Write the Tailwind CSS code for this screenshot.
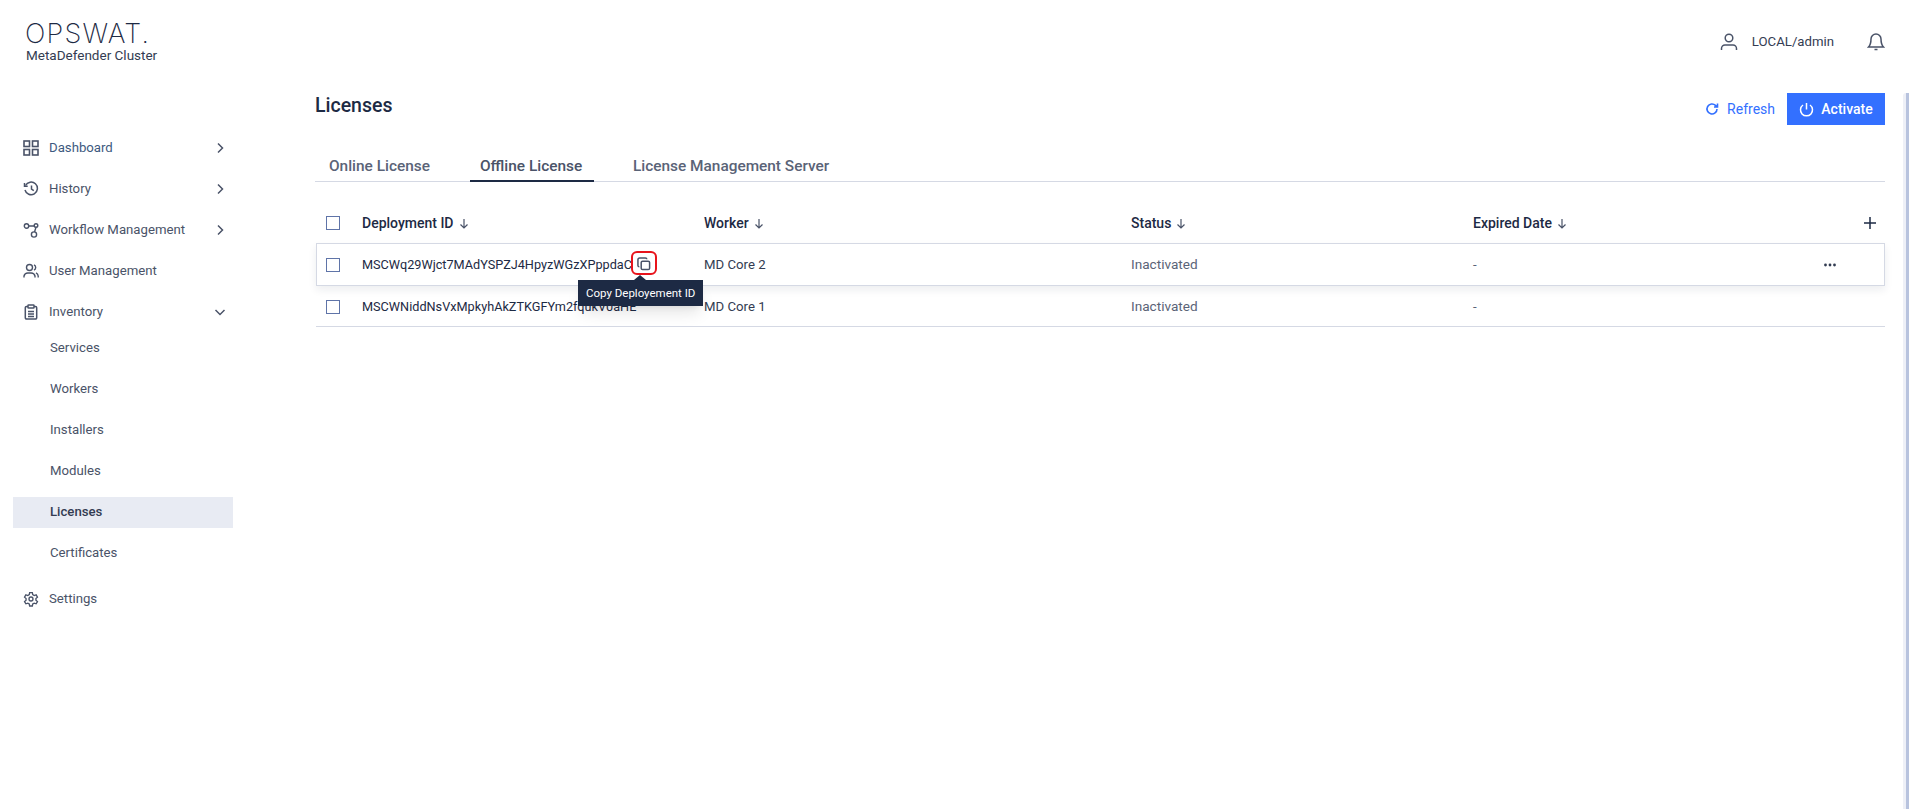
<!DOCTYPE html>
<html lang="en">

<head>
    <meta charset="UTF-8">
    <title>Licenses</title>
    <script src="https://cdn.jsdelivr.net/npm/@tailwindcss/browser@4"></script>
</head>

<body class="relative h-[809px] overflow-hidden bg-white flex font-['Roboto',sans-serif] text-[13.2px] text-[#1d2a44]">
    <!-- sidebar -->
    <aside class="w-[234px] shrink-0 flex flex-col">
        <div class="pl-[26px] pt-[22px] h-[127px]">
            <div class="-ml-[1px] font-['Inter',sans-serif] text-[27px] leading-[24px] font-extralight tracking-[1.200px] text-[#1d2a44]">OPSWAT.</div>
            <div class="text-[13.500px] leading-[16px] mt-[1px] text-[#333c52]">MetaDefender Cluster</div>
        </div>
        <nav class="pl-[13px] text-[#4a5368]">
            <a class="h-[41px] flex items-center pl-[10px] w-[220px]">
                <svg class="w-4 h-4 mr-[10px]" fill="none" stroke="#4a5368" stroke-width="1.6" viewBox="0 0 16 16"><rect x="1" y="1" width="5.5" height="5.5" /><rect x="9.5" y="1" width="5.5" height="5.5" /><rect x="1" y="9.5" width="5.5" height="5.5" /><rect x="9.5" y="9.5" width="5.5" height="5.5" /></svg>
                <span class="flex-1 text-[#3d5a80]">Dashboard</span>
                <svg class="w-4 h-4 mr-[5px]" fill="none" stroke="#4a5368" stroke-width="1.5" viewBox="0 0 16 16"><path d="M6 3.5 10.5 8 6 12.5" /></svg>
            </a>
            <a class="h-[41px] flex items-center pl-[10px] w-[220px]">
                <svg class="w-4 h-4 mr-[10px]" fill="none" stroke="#4a5368" stroke-width="1.5" viewBox="0 0 16 16"><path d="M2.5 4.5A6.3 6.3 0 1 1 2 9" /><path d="M1.5 2v3.2h3.2M8.5 4.5V8l2.3 1.6" /></svg>
                <span class="flex-1">History</span>
                <svg class="w-4 h-4 mr-[5px]" fill="none" stroke="#4a5368" stroke-width="1.5" viewBox="0 0 16 16"><path d="M6 3.5 10.5 8 6 12.5" /></svg>
            </a>
            <a class="h-[41px] flex items-center pl-[10px] w-[220px]">
                <svg class="w-4 h-4 mr-[10px]" fill="none" stroke="#4a5368" stroke-width="1.4" viewBox="0 0 16 16"><circle cx="3.5" cy="4" r="2.2" /><circle cx="13" cy="3.5" r="1.8" /><circle cx="11" cy="12.5" r="2.6" /><path d="M5.7 4h5.5M13 5.3 11.5 10" /></svg>
                <span class="flex-1">Workflow Management</span>
                <svg class="w-4 h-4 mr-[5px]" fill="none" stroke="#4a5368" stroke-width="1.5" viewBox="0 0 16 16"><path d="M6 3.5 10.5 8 6 12.5" /></svg>
            </a>
            <a class="h-[41px] flex items-center pl-[10px] w-[220px]">
                <svg class="w-4 h-4 mr-[10px]" fill="none" stroke="#4a5368" stroke-width="1.4" viewBox="0 0 16 16"><circle cx="6.5" cy="4.5" r="3" /><path d="M1 14.5v-1.5a4 4 0 0 1 4-3h3a4 4 0 0 1 4 3v1.5M11 1.8a3 3 0 0 1 0 5.4M13 9.8a4 4 0 0 1 2.2 3.2v1.5" /></svg>
                <span class="flex-1">User Management</span>
            </a>
            <a class="h-[41px] flex items-center pl-[10px] w-[220px]">
                <svg class="w-4 h-4 mr-[10px]" fill="none" stroke="#4a5368" stroke-width="1.5" viewBox="0 0 16 16"><path d="M5 2.500H3.500A1.200 1.200 0 0 0 2.300 3.700v10.100A1.200 1.200 0 0 0 3.500 15h9a1.200 1.200 0 0 0 1.200-1.200V3.700a1.200 1.200 0 0 0-1.200-1.200H11" /><rect x="5" y="1" width="6" height="3" rx=".6" /><path d="M5 7.500h6M5 10h6M5 12.500h6" /></svg>
                <span class="flex-1">Inventory</span>
                <svg class="w-4 h-4 mr-[5px]" fill="none" stroke="#4a5368" stroke-width="1.5" viewBox="0 0 16 16"><path d="M3.500 6 8 10.500 12.500 6" /></svg>
            </a>
            <div class="w-[220px] -mt-[5px]">
                <a class="h-[41px] flex items-center pl-[37px] text-[#4a5368]">Services</a>
                <a class="h-[41px] flex items-center pl-[37px] text-[#4a5368]">Workers</a>
                <a class="h-[41px] flex items-center pl-[37px] text-[#4a5368]">Installers</a>
                <a class="h-[41px] flex items-center pl-[37px] text-[#4a5368]">Modules</a>
                <a class="h-[31px] mt-[6px] mb-[4px] pb-[2px] flex items-center pl-[37px] bg-[#e8ebf3] font-medium text-[#333c52]">Licenses</a>
                <a class="h-[41px] flex items-center pl-[37px] text-[#4a5368]">Certificates</a>
            </div>
            <a class="h-[41px] mt-[5px] flex items-center pl-[10px] w-[220px]">
                <svg class="w-4 h-4 mr-[10px]" fill="none" stroke="#4a5368" viewBox="0 0 24 24"><path stroke-width="2" d="M10 2.500h4l.6 3 2.200 1.300 2.900-1 2 3.400-2.300 2 0 2.600 2.300 2-2 3.400-2.900-1-2.200 1.300-.6 3h-4l-.6-3-2.200-1.300-2.900 1-2-3.400 2.300-2 0-2.600-2.300-2 2-3.400 2.900 1L9.400 5.500z" /><circle stroke-width="2" cx="12" cy="12" r="3" /></svg>
                <span class="flex-1">Settings</span>
            </a>
        </nav>
    </aside>

    <!-- main -->
    <main class="flex-1 min-w-0 flex flex-col">
        <header class="h-[93px] shrink-0 flex items-start justify-end pt-[33px] pr-[24px]">
            <svg class="w-[18px] h-[18px]" fill="none" stroke="#4a5368" stroke-width="1.500" viewBox="0 0 18 18"><circle cx="9" cy="5" r="3.800" /><path d="M1.500 17v-1.500a3.500 3.500 0 0 1 3.500-3.500h8a3.500 3.500 0 0 1 3.500 3.500V17" /></svg>
            <span class="ml-[14px] leading-[18px] text-[#333c52]">LOCAL/admin</span>
            <svg class="ml-[33px] w-[18px] h-[18px]" fill="none" stroke="#4a5368" stroke-width="1.500" viewBox="0 0 18 18"><path d="M9 1a5 5 0 0 0-5 5c0 5-1.500 7-2.500 8h15c-1-1-2.500-3-2.500-8a5 5 0 0 0-5-5zM7.500 16.500h3" /></svg>
        </header>

        <div class="pl-[81px] pr-[24px]">
            <div class="flex items-start justify-between h-[32px]">
                <h1 class="text-[19.500px] leading-[25px] font-medium text-[#1d2a44]">Licenses</h1>
                <div class="flex items-center">
                    <button class="flex items-center text-[14px] text-[#3370ff] mr-[12px]">
                        <svg class="w-[14px] h-[14px] mr-[8px]" fill="none" stroke="#3370ff" stroke-width="1.600" viewBox="0 0 14 14"><path d="M12 7a5 5 0 1 1-1.500-3.600L12.500 5M12.500 1.500V5H9" /></svg>
                        Refresh
                    </button>
                    <button class="h-[32px] w-[98px] bg-[#3370ff] text-white text-[14px] font-medium flex items-center justify-center">
                        <svg class="w-[15px] h-[15px] mr-[7px]" fill="none" stroke="white" stroke-width="1.500" viewBox="0 0 15 15"><path d="M7.500 1v6.500M4 3a6 6 0 1 0 7 0" /></svg>
                        Activate
                    </button>
                </div>
            </div>

            <!-- tabs -->
            <div class="mt-[28px] flex h-[29px] border-b border-[#d5d9e4] text-[15.400px] leading-[27px] font-medium text-[#5a6377]">
                <div class="w-[155px] pl-[14px]">Online License</div>
                <div class="w-[124px] h-[29px] pl-[10px] border-b-2 border-[#1d2a44] text-[#4a5368]">Offline License</div>
                <div class="pl-[39px]">License Management Server</div>
            </div>

            <!-- table -->
            <div class="mt-[20px] relative">
                <div class="flex items-center h-[41px] pt-[1px] text-[14px] font-medium text-[#1d2a44]">
                    <span class="w-[47px] pl-[11px]"><span class="block w-[14px] h-[14px] border border-[#5f74a8]"></span></span>
                    <span class="w-[342px] flex items-center">Deployment ID
                        <svg class="w-[10px] h-[11px] ml-[5px]" fill="none" stroke="#4a5368" stroke-width="1.200" viewBox="0 0 10 11"><path d="M5 1v9M1.500 6.500 5 10l3.500-3.500" /></svg></span>
                    <span class="w-[427px] flex items-center">Worker
                        <svg class="w-[10px] h-[11px] ml-[5px]" fill="none" stroke="#4a5368" stroke-width="1.200" viewBox="0 0 10 11"><path d="M5 1v9M1.500 6.500 5 10l3.500-3.500" /></svg></span>
                    <span class="w-[342px] flex items-center">Status
                        <svg class="w-[10px] h-[11px] ml-[5px]" fill="none" stroke="#4a5368" stroke-width="1.200" viewBox="0 0 10 11"><path d="M5 1v9M1.500 6.500 5 10l3.500-3.500" /></svg></span>
                    <span class="flex-1 flex items-center">Expired Date
                        <svg class="w-[10px] h-[11px] ml-[5px]" fill="none" stroke="#4a5368" stroke-width="1.200" viewBox="0 0 10 11"><path d="M5 1v9M1.500 6.500 5 10l3.500-3.500" /></svg></span>
                    <svg class="w-[14px] h-[14px] mr-[8px]" fill="none" stroke="#1d2a44" stroke-width="1.500" viewBox="0 0 14 14"><path d="M7 1v12M1 7h12" /></svg>
                </div>
                <div class="ml-[1px] flex items-center h-[43px] border border-[#d5d9e4] shadow-[0_4px_8px_rgba(29,42,68,0.08)]">
                    <span class="w-[45px] pl-[9px]"><span class="block w-[14px] h-[14px] border border-[#5f74a8]"></span></span>
                    <span class="w-[342px] text-[12.700px] text-[#1d2a44]">MSCWq29Wjct7MAdYSPZJ4HpyzWGzXPppdaC7</span>
                    <span class="w-[427px] text-[#333c52]">MD Core 2</span>
                    <span class="w-[342px] text-[13.600px] text-[#5a6377]">Inactivated</span>
                    <span class="flex-1 text-[#5a6377]">-</span>
                    <svg class="w-[14px] h-[14px] mr-[47px]" fill="#333c52" viewBox="0 0 14 14"><circle cx="2.500" cy="7" r="1.400" /><circle cx="7" cy="7" r="1.400" /><circle cx="11.500" cy="7" r="1.400" /></svg>
                </div>
                <div class="ml-[1px] flex items-center h-[41px] pt-[1px] border-b border-[#d5d9e4]">
                    <span class="w-[46px] pl-[10px]"><span class="block w-[14px] h-[14px] border border-[#5f74a8]"></span></span>
                    <span class="w-[342px] text-[12.700px] text-[#1d2a44]">MSCWNiddNsVxMpkyhAkZTKGFYm2fqukV0aHE</span>
                    <span class="w-[427px] text-[#333c52]">MD Core 1</span>
                    <span class="w-[342px] text-[13.600px] text-[#5a6377]">Inactivated</span>
                    <span class="flex-1 text-[#5a6377]">-</span>
                </div>

                <!-- copy button highlighted + tooltip -->
                <div class="absolute left-[316px] top-[49px] w-[26px] h-[24px] bg-white border-2 border-[#e8141c] rounded-[6px] flex items-center justify-center">
                    <svg class="w-[14px] h-[14px] translate-y-[1px]" fill="none" stroke="#4a5368" stroke-width="1.600" viewBox="0 0 15 15"><rect x="4.500" y="4.500" width="9" height="9" rx="1.500" /><path d="M10.500 2.500A1.500 1.500 0 0 0 9 1H3A2 2 0 0 0 1 3v6a1.500 1.500 0 0 0 1.500 1.500" /></svg>
                </div>
                <div class="absolute left-[263px] top-[78px] px-[8px] h-[26px] w-[125px] bg-[#1d2a44] text-white text-[11.500px] leading-[26px] whitespace-nowrap shadow-lg">
                    <span class="absolute left-[56px] -top-[5px] w-0 h-0 border-x-[6px] border-x-transparent border-b-[5px] border-b-[#1d2a44]"></span>
                    Copy Deployement ID
                </div>
            </div>
        </div>
    </main>

    <!-- scrollbar at the window's edge -->
    <div class="absolute right-0 top-[93px] bottom-0 w-[6px] bg-[#eef0f7] rounded-tl-[3px] flex justify-end">
        <div class="w-[3px] h-full bg-[#b8c3de]"></div>
    </div>
</body>

</html>
